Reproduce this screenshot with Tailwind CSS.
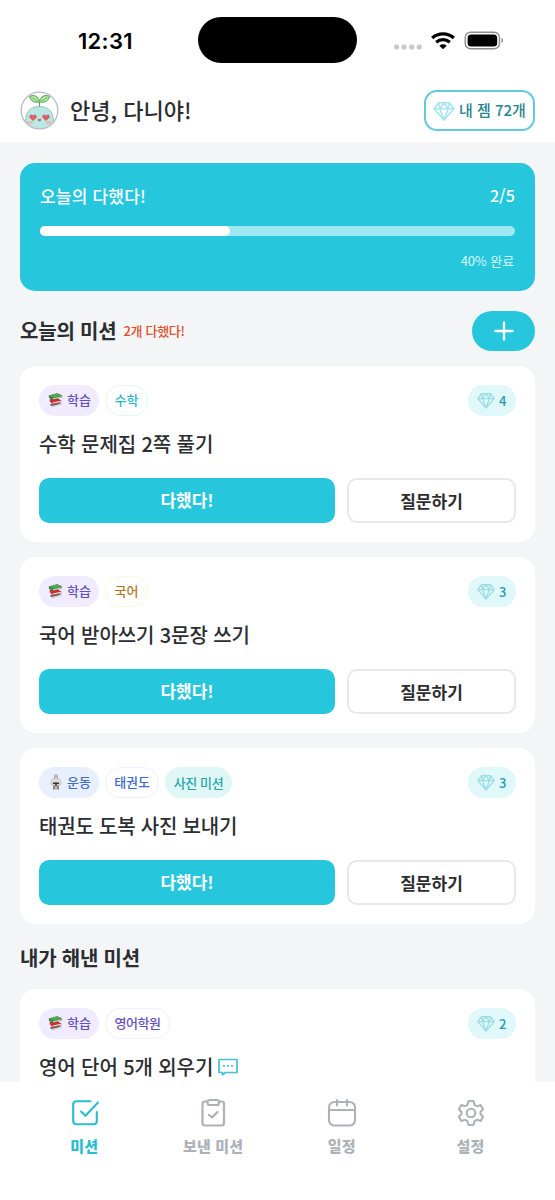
<!DOCTYPE html>
<html lang="ko">
<head>
<meta charset="utf-8">
<title>미션</title>
<script src="https://cdn.jsdelivr.net/npm/@tailwindcss/browser@4"></script>
</head>
<body class="font-['Noto_Sans_CJK_KR',sans-serif] text-[#2b2d31]">
<svg class="hidden">
  <symbol id="gem" viewBox="0 0 24 22"><path d="M6 2H18L23 8.500L12 21L1 8.500ZM1 8.500H23M6 2L7.500 8.500L12 21L16.500 8.500L18 2M7.500 8.500L12 2L16.500 8.500" fill="none" stroke="currentColor" stroke-width="1.700" stroke-linejoin="round"/></symbol>
  <symbol id="books" viewBox="0 0 14.500 14">
    <path d="M2 11L10 9.500L13.500 11L5 13.500L2.500 13Z" fill="#6d5c5c"/><path d="M3 11.500L5.500 12.500L13 10.500V12L5.500 13.700Z" fill="#d9cfc8"/>
    <path d="M1.500 6L9 5L13 7.500V9.500L4.500 11L1.500 8.500Z" fill="#c9303a"/><path d="M4.500 9.500L13 7.800V9L4.800 10.500Z" fill="#eee3dc"/>
    <path d="M.5 2.500L9 .3L14 2.500L13.500 4.500L4.500 6.800L.8 5Z" fill="#37813f"/><path d="M.7 2.500L9 .3L13.800 2.400L4.800 4.600Z" fill="#55a552"/><path d="M4.800 5.200L13.500 3.200L13.300 4.200L4.800 6.300Z" fill="#e0e5d8"/>
  </symbol>
</svg>
<div class="w-[555px] h-[1200px] overflow-hidden flex flex-col bg-[#f3f5f7]">
  <header class="h-[142px] shrink-0 bg-white">
    <div class="h-[80px] pt-[17px] flex">
      <div class="w-[198px] pl-[78px] pt-[10px] h-[46px] text-black font-['Inter'] font-semibold text-[22px] leading-[28px]"><span class="tracking-[0.3px]">12:31</span></div>
      <div class="w-[159px] h-[46px] rounded-full bg-black"></div>
      <div class="pl-[36px] pt-[13px] flex">
        <svg class="w-[30px] h-[22px] mt-[1px]" viewBox="0 0 30 22" fill="#c8c8c8"><rect x="1" y="13.500" width="5" height="5" rx="2"/><rect x="8.600" y="13.500" width="5" height="5" rx="2"/><rect x="16.200" y="13.500" width="5" height="5" rx="2"/><rect x="23.700" y="13.500" width="5" height="5" rx="2"/></svg>
        <svg class="ml-[8px] w-[24px] h-[20px]" viewBox="0 0 24 20" fill="none" stroke="#000" stroke-width="3.300"><path d="M1.200 8C7.200 2.500 16.800 2.500 22.800 8M5.200 12.300C9.200 8.800 14.800 8.800 18.800 12.300"/><path d="M8.300 15.700C10.500 13.900 13.500 13.900 15.700 15.700L12 19.200Z" fill="#000" stroke="none"/></svg>
        <svg class="ml-[9px] w-[41px] h-[21px]" viewBox="0 0 41 21"><rect x="1.200" y="2.200" width="34.300" height="16.600" rx="5.500" fill="none" stroke="#8c8c8c" stroke-width="1.400"/><rect x="3.600" y="4.600" width="29.600" height="11.800" rx="3.500"/><path d="M37.500 8C39.600 8.500 39.600 12.500 37.500 13Z" fill="#8c8c8c"/></svg>
      </div>
    </div>
    <div class="px-[20px] pt-[10px] flex items-center h-[51px]">
      <svg class="w-[39px] h-[39px]" viewBox="0 0 39 39">
        <defs><clipPath id="face"><circle cx="19.500" cy="19.500" r="18"/></clipPath></defs>
        <circle cx="19.500" cy="19.500" r="18.300" fill="#fff"/>
        <g clip-path="url(#face)"><path d="M5.500 31C5.500 20 11 15.500 19.500 15.500S33.500 20 33.500 31Q31 41 19.500 41T5.500 31Z" fill="#b9e7e1" stroke="#86b9b5" stroke-width=".8"/></g>
        <path d="M19.500 15.500V11C14 12 10.500 10 9.500 5.500C14 3 18.500 5.500 19.500 10.500C20.500 5.500 25 3 29.500 5.500C28.500 10 25 12 19.700 11" fill="#aee59a" stroke="#57a35e" stroke-width="1"/><path d="M11.500 6.500L18.500 10.500M27.500 6.500L20.500 10.500" stroke="#6eb66c" stroke-width=".8"/>
        <path id="heart" d="M13 29.500L10 26.700C8.500 24.500 11.500 22.800 13 25C14.500 22.800 17.500 24.500 16 26.700Z" fill="#ee5967" stroke="#a7545c" stroke-width=".6"/><use href="#heart" x="13"/>
        <path d="M18 27.500Q19.500 29 21 27.500V29.500Q19.500 31 18 29.500Z" fill="#c75c62"/><path d="M8 31.500H12M27 31.500H31" stroke="#f5b29c" stroke-width="2" stroke-linecap="round"/>
        <circle cx="19.500" cy="19.500" r="18.300" fill="none" stroke="#b9bbc6" stroke-width="1.300"/>
      </svg>
      <h1 class="ml-[11px] pb-[4px] text-[22px] font-medium leading-none whitespace-nowrap">안녕, 다니야!</h1>
      <div class="ml-auto w-[111px] h-[41px] rounded-[13px] border-2 border-[#5fcbd7] flex items-center pl-[7px]">
        <svg class="w-[22px] h-[20px] text-[#a5e5f0]"><use href="#gem"/></svg>
        <span class="ml-[4px] pb-[2px] text-[15px] font-medium leading-none whitespace-nowrap text-[#28848e]">내 젬 72개</span>
      </div>
    </div>
  </header>

  <main class="h-[940px] shrink-0 overflow-hidden px-[20px] pt-[21px]">
    <section class="h-[128px] rounded-[15px] bg-[#26c6dc] px-[20px] pt-[22px] text-white">
      <div class="flex justify-between h-[20px] items-center leading-none font-medium"><span class="text-[17px] tracking-[0.2px]">오늘의 다했다!</span><span class="text-[16px] tracking-[0.2px]">2/5</span></div>
      <div class="mt-[21px] h-[10px] rounded-full bg-[#9ee8ef]"><div class="h-full rounded-full bg-white" style="width:40%"></div></div>
      <div class="mt-[18px] pr-[1px] text-right text-[13px] tracking-[-0.1px] leading-[14px] text-[#d8f7fa]">40% 완료</div>
    </section>
    <div class="mt-[20px] h-[40px] flex items-center leading-none whitespace-nowrap">
      <h2 class="text-[20px] tracking-[-0.2px] font-bold">오늘의 미션</h2><span class="ml-[7px] pb-[2px] text-[13px] font-medium tracking-[-0.3px] text-[#dc4f2b]">2개 다했다!</span>
      <button class="ml-auto w-[63px] h-[40px] rounded-full bg-[#26c6dc] flex items-center justify-center"><svg class="w-[20px] h-[20px]" viewBox="0 0 20 20" stroke="#fff" stroke-width="2.400" stroke-linecap="round"><path d="M10 1.500V18.500M1.500 10H18.500"/></svg></button>
    </div>

    <article class="mt-[15px] h-[176px] rounded-[16px] bg-white px-[19px] pt-[19px] leading-none whitespace-nowrap">
      <div class="flex items-center h-[31px] text-[13px] font-medium">
        <span class="w-[60px] h-[31px] pb-[2px] rounded-full bg-[#f0ebff] text-[#6350bd] flex items-center pl-[9px]"><svg class="w-[15px] h-[14px] mr-[4px]"><use href="#books"/></svg>학습</span>
        <span class="ml-[6px] w-[43px] h-[31px] pb-[2px] rounded-full border border-[#e3f6f7] text-[#29b5c5] flex items-center justify-center">수학</span>
        <span class="ml-auto w-[48px] h-[31px] rounded-full bg-[#e0f8fa] text-[#289ba8] flex items-center pl-[9px]"><svg class="w-[18px] h-[17px] mr-[4px] text-[#9cdde4]"><use href="#gem"/></svg>4</span>
      </div>
      <h3 class="mt-[18px] text-[20px] tracking-[-0.1px] font-medium leading-[20px]">수학 문제집 2쪽 풀기</h3>
      <div class="mt-[24px] flex gap-[12px] text-[17px] font-bold"><button class="w-[296px] h-[45px] pb-[2px] rounded-[10px] bg-[#26c6dc] text-white">다했다!</button><button class="w-[169px] h-[45px] rounded-[10px] border-2 border-[#e7e8ea]">질문하기</button></div>
    </article>

    <article class="mt-[15px] h-[176px] rounded-[16px] bg-white px-[19px] pt-[19px] leading-none whitespace-nowrap">
      <div class="flex items-center h-[31px] text-[13px] font-medium">
        <span class="w-[60px] h-[31px] pb-[2px] rounded-full bg-[#f0ebff] text-[#6350bd] flex items-center pl-[9px]"><svg class="w-[15px] h-[14px] mr-[4px]"><use href="#books"/></svg>학습</span>
        <span class="ml-[6px] w-[43px] h-[31px] pb-[2px] rounded-full border border-[#fbf9d8] text-[#b07a22] flex items-center justify-center">국어</span>
        <span class="ml-auto w-[48px] h-[31px] rounded-full bg-[#e0f8fa] text-[#289ba8] flex items-center pl-[9px]"><svg class="w-[18px] h-[17px] mr-[4px] text-[#9cdde4]"><use href="#gem"/></svg>3</span>
      </div>
      <h3 class="mt-[18px] text-[20px] tracking-[-0.1px] font-medium leading-[20px]">국어 받아쓰기 3문장 쓰기</h3>
      <div class="mt-[24px] flex gap-[12px] text-[17px] font-bold"><button class="w-[296px] h-[45px] pb-[2px] rounded-[10px] bg-[#26c6dc] text-white">다했다!</button><button class="w-[169px] h-[45px] rounded-[10px] border-2 border-[#e7e8ea]">질문하기</button></div>
    </article>

    <article class="mt-[15px] h-[176px] rounded-[16px] bg-white px-[19px] pt-[19px] leading-none whitespace-nowrap">
      <div class="flex items-center h-[31px] text-[13px] font-medium">
        <span class="w-[60px] h-[31px] pb-[2px] rounded-full bg-[#e8effd] text-[#3f6cc8] flex items-center pl-[10px]"><svg class="w-[14px] h-[16px] mr-[4px]" viewBox="0 0 14 16"><circle cx="7" cy="2.500" r="2.200" fill="#b9b6b0"/><path d="M4 4.500H10L12.500 9L11 11L10 9.500V12H4V9.500L3 11L1.500 9Z" fill="#deddd9" stroke="#aaa8a2" stroke-width=".5"/><path d="M4 8.500H10V10H4ZM6.200 10H7.800V12H6.200Z" fill="#36332f"/><path d="M4 11.500H6.500V15.500H4ZM7.500 11.500H10V15.500H7.500Z" fill="#8c8983"/></svg>운동</span>
        <span class="ml-[6px] w-[54px] h-[31px] pb-[2px] rounded-full border border-[#eff1f8] text-[#3f6cc8] flex items-center justify-center tracking-[-0.2px]">태권도</span>
        <span class="ml-[6px] w-[67px] h-[31px] rounded-full bg-[#dff7f6] text-[#28a4ad] flex items-center justify-center tracking-[-0.4px]">사진 미션</span>
        <span class="ml-auto w-[48px] h-[31px] rounded-full bg-[#e0f8fa] text-[#289ba8] flex items-center pl-[9px]"><svg class="w-[18px] h-[17px] mr-[4px] text-[#9cdde4]"><use href="#gem"/></svg>3</span>
      </div>
      <h3 class="mt-[18px] text-[20px] tracking-[-0.2px] font-medium leading-[20px]">태권도 도복 사진 보내기</h3>
      <div class="mt-[24px] flex gap-[12px] text-[17px] font-bold"><button class="w-[296px] h-[45px] pb-[2px] rounded-[10px] bg-[#26c6dc] text-white">다했다!</button><button class="w-[169px] h-[45px] rounded-[10px] border-2 border-[#e7e8ea]">질문하기</button></div>
    </article>

    <h2 class="mt-[24px] text-[20px] tracking-[-0.2px] leading-[20px] font-bold">내가 해낸 미션</h2>
    <article class="mt-[21px] h-[176px] rounded-[16px] bg-white px-[19px] pt-[19px] leading-none whitespace-nowrap">
      <div class="flex items-center h-[31px] text-[13px] font-medium">
        <span class="w-[60px] h-[31px] pb-[2px] rounded-full bg-[#f0ebff] text-[#6350bd] flex items-center pl-[9px]"><svg class="w-[15px] h-[14px] mr-[4px]"><use href="#books"/></svg>학습</span>
        <span class="ml-[6px] w-[65px] h-[31px] pb-[2px] rounded-full border border-[#f1eff9] text-[#6350bd] flex items-center justify-center tracking-[-0.4px]">영어학원</span>
        <span class="ml-auto w-[48px] h-[31px] rounded-full bg-[#e0f8fa] text-[#289ba8] flex items-center pl-[9px]"><svg class="w-[18px] h-[17px] mr-[4px] text-[#9cdde4]"><use href="#gem"/></svg>2</span>
      </div>
      <h3 class="mt-[18px] text-[20px] tracking-[-0.1px] font-medium leading-[20px] flex items-center">영어 단어 5개 외우기<svg class="ml-[5px] w-[20px] h-[18px]" viewBox="0 0 20 18" fill="none" stroke="#43c1d1" stroke-width="1.700" stroke-linejoin="round"><path d="M1 1.500H19V14.500H7.500L4.500 16.800V14.500H1Z"/><path d="M5.200 8H6.800M9.200 8H10.800M13.200 8H14.800" stroke-width="2"/></svg></h3>
    </article>
  </main>

  <nav class="h-[118px] shrink-0 bg-white px-[20px] pt-[15px] grid grid-cols-4 text-[15px] tracking-[0.2px] font-black leading-none text-[#adb2b9]">
    <div class="flex flex-col items-center text-[#28bdcf]"><svg class="w-[32px] h-[32px] ml-[2px]" viewBox="0 0 32 32" fill="none" stroke="currentColor" stroke-width="2.100" stroke-linecap="round" stroke-linejoin="round"><path d="M21.500 4.200H7.500Q4.200 4.200 4.200 7.500V24Q4.200 27.300 7.500 27.300H24.500Q27.800 27.300 27.800 24V15M12 14.500L16.500 18.800L29 5.500"/></svg><span class="mt-[9px]">미션</span></div>
    <div class="flex flex-col items-center"><svg class="w-[32px] h-[32px]" viewBox="0 0 32 32" fill="none" stroke="currentColor" stroke-width="2.200" stroke-linecap="round" stroke-linejoin="round"><path d="M10.500 4.500H8Q5.500 4.500 5.500 7V26Q5.500 28.500 8 28.500H24.500Q27 28.500 27 26V7Q27 4.500 24.500 4.500H22M12 18L15 20.500L20.500 15"/><rect x="10.500" y="3" width="11.500" height="5" rx="2"/></svg><span class="mt-[9px]">보낸 미션</span></div>
    <div class="flex flex-col items-center"><svg class="w-[32px] h-[32px]" viewBox="0 0 32 32" fill="none" stroke="currentColor" stroke-width="2.100" stroke-linecap="round"><rect x="3" y="5" width="26" height="23.500" rx="5.500"/><path d="M3 13H29M11 3V8.500M21 3V8.500"/></svg><span class="mt-[9px]">일정</span></div>
    <div class="flex flex-col items-center"><svg class="w-[32px] h-[32px]" viewBox="0 0 32 32" fill="none" stroke="currentColor" stroke-width="2.100" stroke-linejoin="round"><path d="M13.500 4H18.500L19.500 7.800L22 9.200L25.700 8L28 12.200L25.500 15V17L28 19.800L25.700 24L22 22.800L19.500 24.200L18.500 28H13.500L12.500 24.200L10 22.800L6.300 24L4 19.800L6.500 17V15L4 12.200L6.300 8L10 9.200L12.500 7.800Z"/><circle cx="16" cy="16" r="4.300"/></svg><span class="mt-[9px]">설정</span></div>
  </nav>
</div>
</body>
</html>
